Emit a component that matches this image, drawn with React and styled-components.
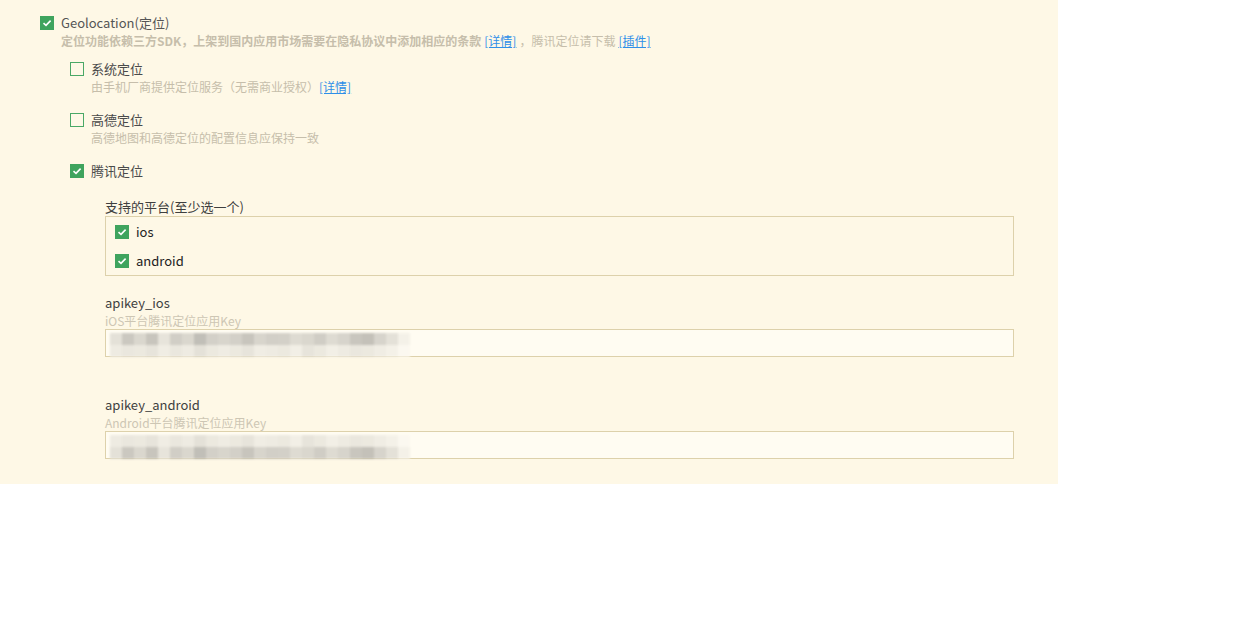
import React from "react";
import styled, { createGlobalStyle } from "styled-components";

const Global = createGlobalStyle`
  html, body { margin: 0; padding: 0; background: #fff; }
  body { font-family: "Noto Sans CJK SC", "Liberation Sans", sans-serif; }
`;

const Panel = styled.div`
  width: 1058px;
  background: #fef8e6;
  padding: 14px 0 25px 40px;
  box-sizing: border-box;
`;

const Item = styled.div`
  display: grid;
  grid-template-columns: 14px 1fr;
  column-gap: 7px;
  margin-top: ${p => p.gap || 0}px;
`;

const Box = styled.span`
  width: 14px;
  height: 14px;
  box-sizing: border-box;
  align-self: center;
  display: flex;
  align-items: center;
  justify-content: center;
  background: ${p => (p.checked ? "#3fa45e" : "transparent")};
  border: ${p => (p.checked ? "none" : "1.5px solid #4aa866")};
`;

const Label = styled.div`
  font-size: 13px;
  line-height: 18px;
  height: 18px;
  color: ${p => p.color || "#4a4a4a"};
  white-space: nowrap;
`;

const Desc = styled.div`
  grid-column: 2;
  font-size: 12px;
  line-height: 18px;
  height: 18px;
  color: #c6beab;
  font-weight: ${p => (p.bold ? 700 : 400)};
  white-space: nowrap;
`;

const Plain = styled.span`
  font-weight: 400;
`;

const Link = styled.a`
  color: #2f8fe8;
  text-decoration: underline;
  font-weight: 400;
  margin: 0 ${p => (p.tight ? 0 : 3)}px;
`;

const SubList = styled.div`
  margin: 10px 0 0 30px;
`;

const Nested = styled.div`
  margin: 18px 0 0 35px;
  width: 909px;
`;

const FieldTitle = styled.div`
  font-size: 13px;
  line-height: 18px;
  color: #3f3f3f;
  margin-top: ${p => p.gap || 0}px;
`;

const FieldHint = styled.div`
  font-size: 12px;
  line-height: 17px;
  color: #cdc6b4;
`;

const PlatformBox = styled.div`
  border: 1px solid #ddd1ab;
  padding: 0 0 0 9px;
`;

const PlatformRow = styled.div`
  display: flex;
  align-items: center;
  gap: 7px;
  height: 29px;
`;

const KeyInput = styled.div`
  height: 28px;
  box-sizing: border-box;
  border: 1px solid #ddd1ab;
  background: #fffcf2;
  display: flex;
  align-items: flex-start;
  padding: 3px 0 0 4px;
  overflow: visible;
`;

const Mosaic = styled.div`
  display: grid;
  grid-template-columns: repeat(25, 12px);
  grid-auto-rows: 12px;
  filter: blur(1px);
  opacity: 0.95;
`;

const Cell = styled.span`
  background: ${p => p.c};
`;

function Check({ checked }) {
  return (
    <Box checked={checked}>
      {checked && (
        <svg width="10" height="8" viewBox="0 0 10 8">
          <path d="M1.5 4.2 L4 6.4 L8.6 1.6" fill="none" stroke="#fff" strokeWidth="1.6" />
        </svg>
      )}
    </Box>
  );
}

const rowA = [
  "#e3e0d7", "#c9c6be", "#d9d6cd", "#c6c3bb", "#e6e3da", "#cfccc4", "#d9d6cd", "#bebcb5",
  "#d1cec6", "#d6d3cb", "#d1cec6", "#c6c3bb", "#d6d3cb", "#d0cdc5", "#d1cec6", "#dddad1",
  "#d9d6cd", "#cecbc3", "#dddad1", "#d5d2ca", "#c7c4bc", "#c1beb6", "#d5d2ca", "#e3e0d7", "#f4f1e8",
];
const rowB = [
  "#eeebe2", "#e9e6dd", "#ebe8df", "#e6e3da", "#f0ede4", "#e9e6dd", "#eeebe2", "#e3e0d7",
  "#ebe8df", "#efece3", "#ebe8df", "#e6e3da", "#f0ede4", "#eeebe2", "#ebe8df", "#f2efe6",
  "#e6e3da", "#ebe8df", "#f2efe6", "#eeebe2", "#e9e6dd", "#ebe8df", "#f0ede4", "#f4f1e8", "#fbf8f0",
];

function Blurred({ flip }) {
  const rows = flip ? [rowB, rowA] : [rowA, rowB];
  return (
    <Mosaic>
      {rows.map((r, i) => r.map((c, j) => <Cell key={i + "-" + j} c={c} />))}
    </Mosaic>
  );
}

export default function App() {
  return (
    <>
      <Global />
      <Panel>
        <Item>
          <Check checked />
          <Label color="#555">Geolocation(定位)</Label>
          <Desc bold>
            定位功能依赖三方SDK，上架到国内应用市场需要在隐私协议中添加相应的条款
            <Link>[详情]</Link>
            <Plain>，腾讯定位请下载</Plain>
            <Link>[插件]</Link>
          </Desc>
        </Item>
        <SubList>
          <Item>
            <Check />
            <Label>系统定位</Label>
            <Desc>
              由手机厂商提供定位服务（无需商业授权）<Link tight>[详情]</Link>
            </Desc>
          </Item>
          <Item gap={15}>
            <Check />
            <Label>高德定位</Label>
            <Desc>高德地图和高德定位的配置信息应保持一致</Desc>
          </Item>
          <Item gap={15}>
            <Check checked />
            <Label>腾讯定位</Label>
          </Item>
          <Nested>
            <FieldTitle>支持的平台(至少选一个)</FieldTitle>
            <PlatformBox>
              <PlatformRow>
                <Check checked />
                <Label color="#222">ios</Label>
              </PlatformRow>
              <PlatformRow>
                <Check checked />
                <Label color="#222">android</Label>
              </PlatformRow>
            </PlatformBox>
            <FieldTitle gap={18}>apikey_ios</FieldTitle>
            <FieldHint>iOS平台腾讯定位应用Key</FieldHint>
            <KeyInput>
              <Blurred />
            </KeyInput>
            <FieldTitle gap={39}>apikey_android</FieldTitle>
            <FieldHint>Android平台腾讯定位应用Key</FieldHint>
            <KeyInput>
              <Blurred flip />
            </KeyInput>
          </Nested>
        </SubList>
      </Panel>
    </>
  );
}
